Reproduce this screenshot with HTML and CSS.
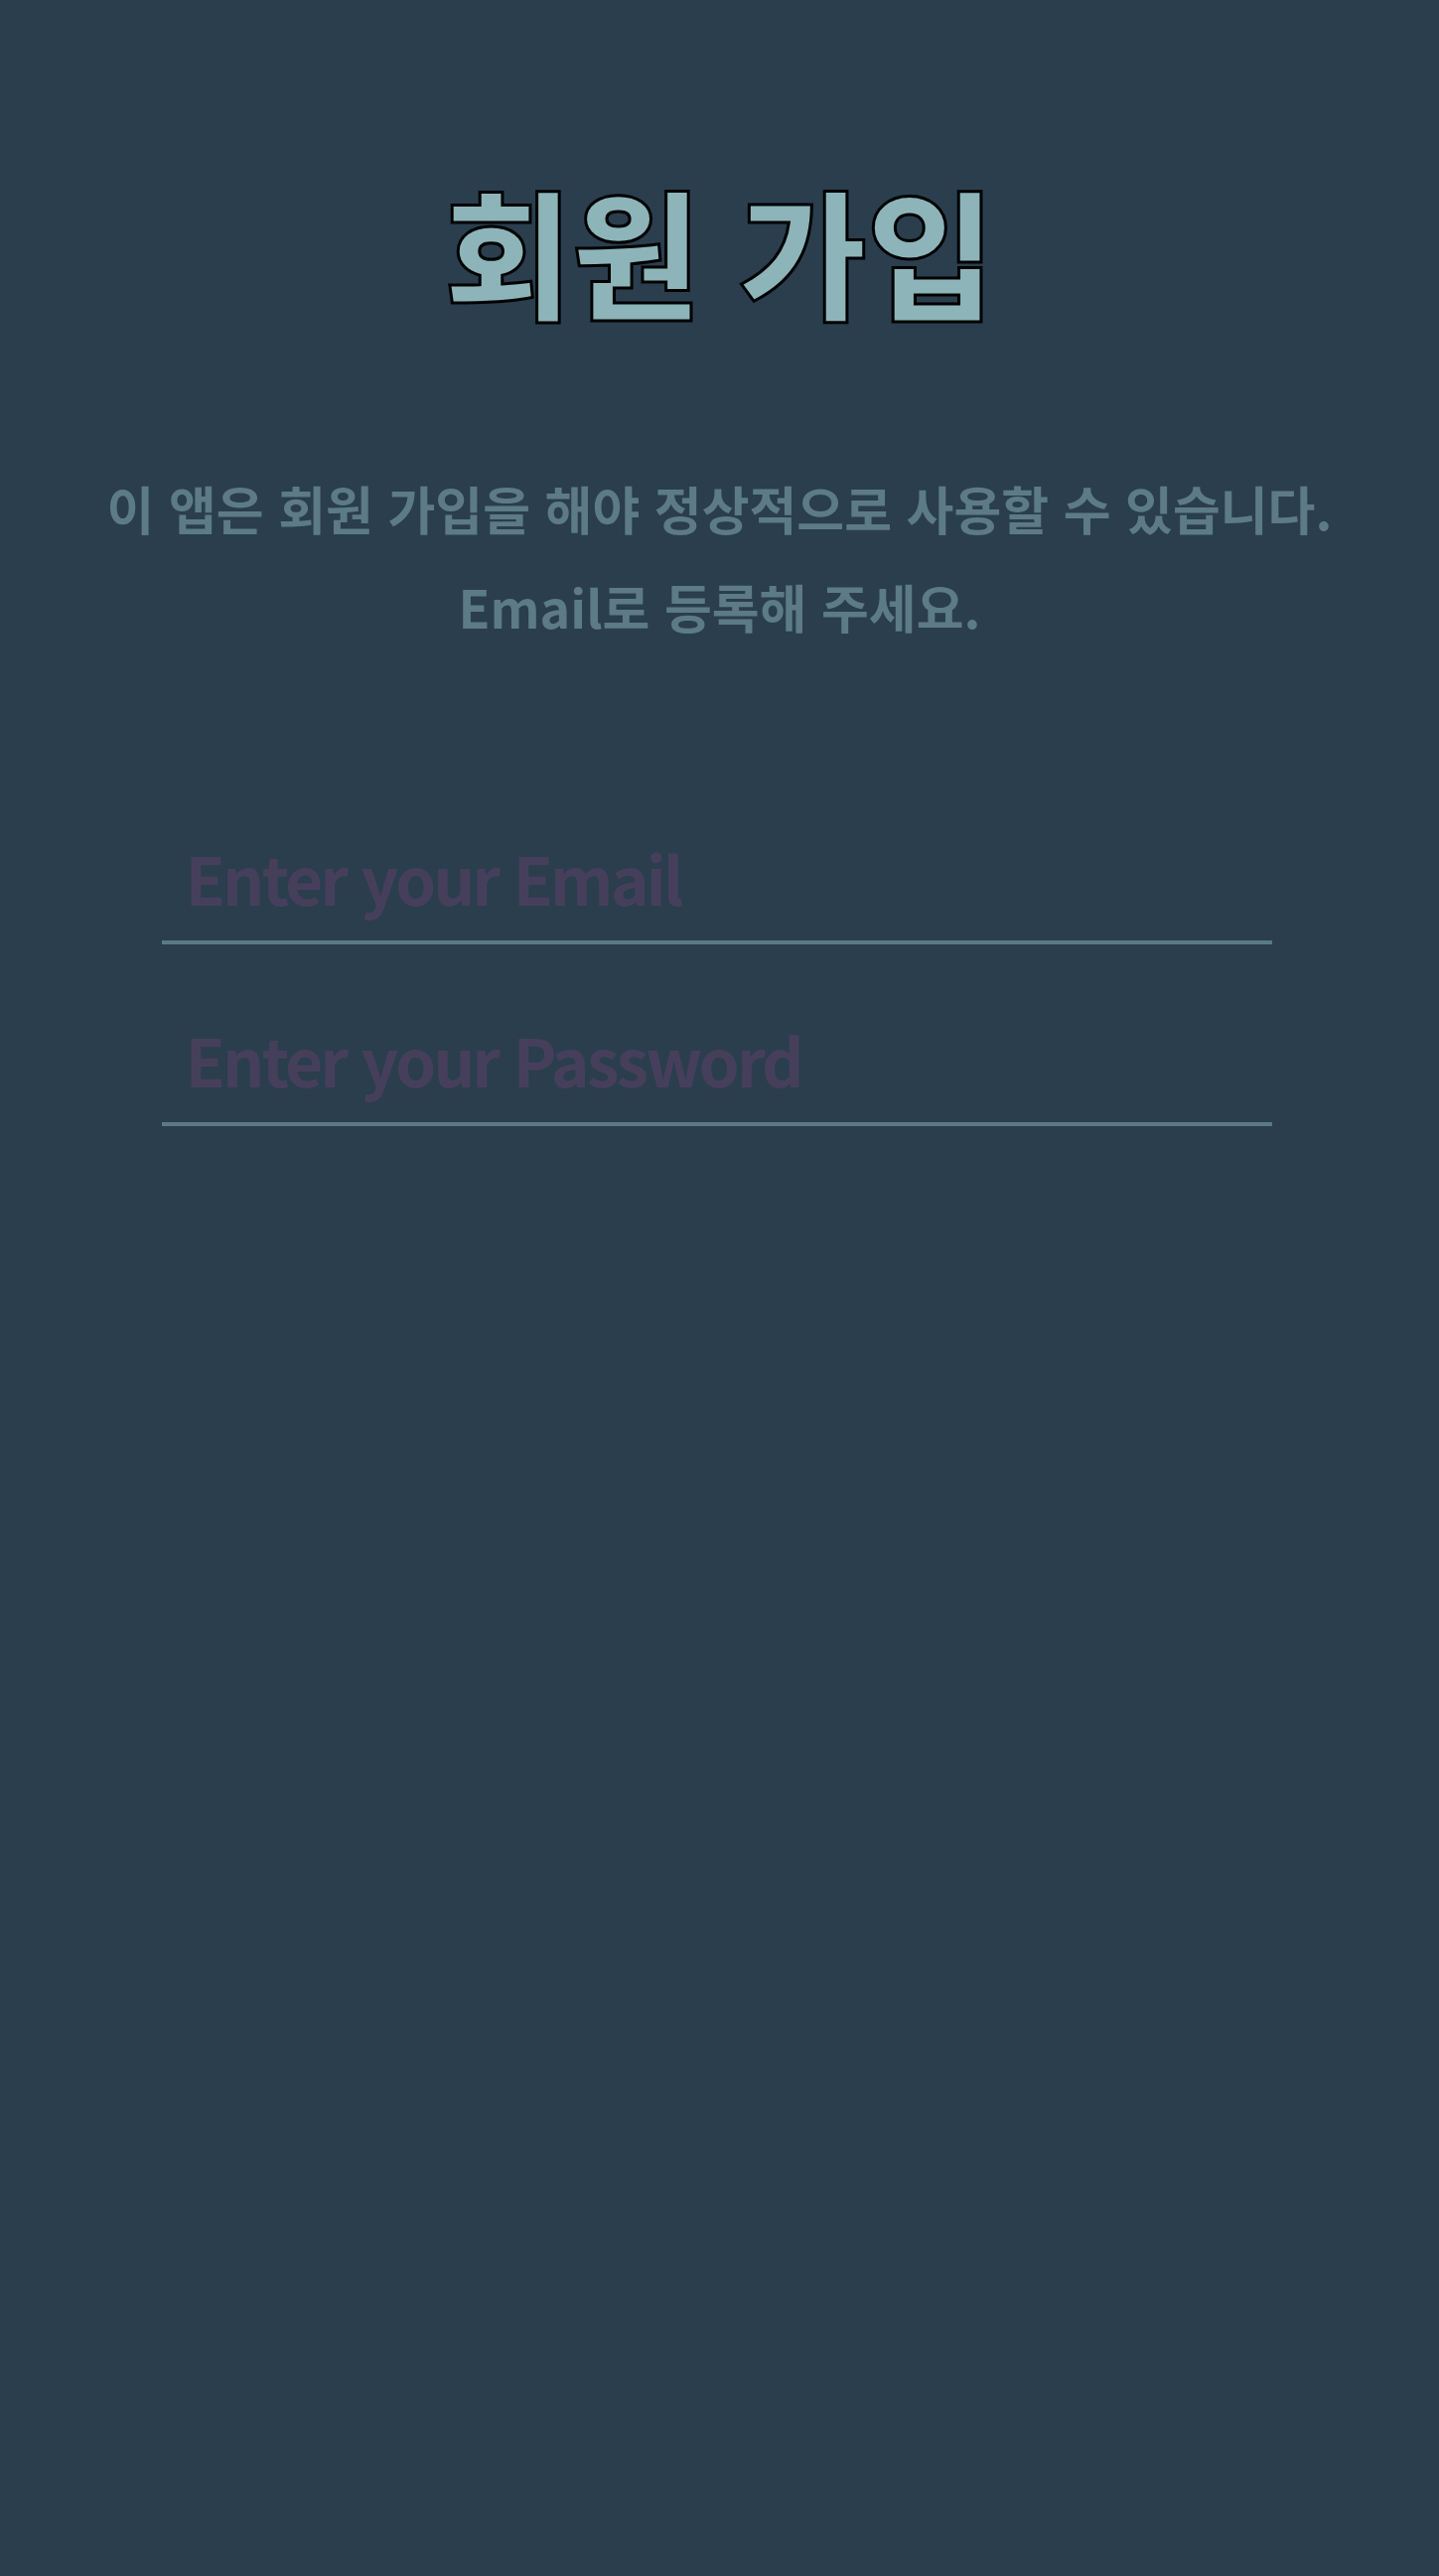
FILE: index.html
```html
<!DOCTYPE html>
<html lang="ko">
<head>
<meta charset="utf-8">
<title>회원 가입</title>
<link rel="stylesheet" href="styles.css">
</head>
<body>
<main class="page">
  <h1 class="title">회원 가입</h1>
  <p class="intro">이 앱은 회원 가입을 해야 정상적으로 사용할 수 있습니다.<br>Email로 등록해 주세요.</p>
  <form class="signup">
    <input class="field" type="email" placeholder="Enter your Email">
    <input class="field" type="password" placeholder="Enter your Password">
  </form>
</main>
</body>
</html>
```

FILE: styles.css
```css
html, body {
  margin: 0;
  padding: 0;
  background: #2a3e4e;
}
body {
  min-height: 2594px;
  font-family: "Noto Sans CJK KR", "Noto Sans", sans-serif;
}
.page {
  display: flex;
  flex-direction: column;
  align-items: center;
  padding-top: 150px;
}
.title {
  margin: 0;
  font-size: 140px;
  line-height: 200px;
  font-weight: 900;
  color: #8db5b9;
  -webkit-text-stroke: 3px #000;
}
.intro {
  margin: 112px 0 0;
  font-size: 52px;
  line-height: 99px;
  font-weight: 700;
  color: #5d7b86;
  text-align: center;
}
.signup {
  display: flex;
  flex-direction: column;
  gap: 38px;
  margin: 146px 6px 0 0;
  width: 1118px;
}
.field {
  display: block;
  box-sizing: border-box;
  width: 100%;
  height: 145px;
  padding: 12px 24px 0;
  border: 0;
  border-bottom: 4px solid #5a7b84;
  background: transparent;
  font-family: "Noto Sans CJK KR", "Noto Sans", sans-serif;
  font-size: 66px;
  letter-spacing: -3px;
  font-weight: 700;
  color: #8db5b9;
  outline: none;
}
.field::placeholder {
  color: #463f5c;
  opacity: 1;
}
```
